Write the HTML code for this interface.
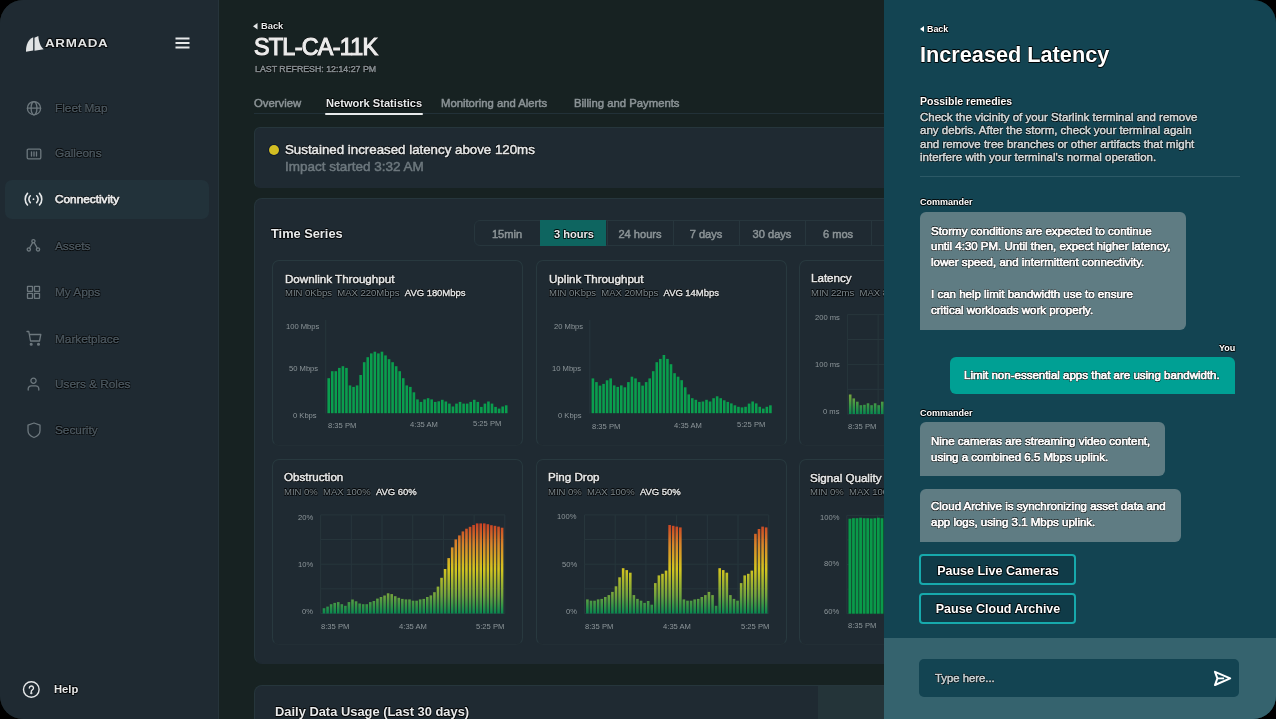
<!DOCTYPE html><html><head><meta charset="utf-8"><style>
*{box-sizing:border-box;margin:0;padding:0}
html,body{width:1276px;height:719px;overflow:hidden;background:#000;font-family:"Liberation Sans",sans-serif;}
.app{position:absolute;left:0;top:0;width:1276px;height:719px;border-radius:23px;overflow:hidden;background:#172222;}
.a{position:absolute;white-space:nowrap;line-height:1;will-change:transform}
.ts{text-shadow:0.6px 0.6px 0.6px rgba(0,0,0,.75),-0.6px -0.6px 0.6px rgba(0,0,0,.75),0.6px -0.6px 0.6px rgba(0,0,0,.75),-0.6px 0.6px 0.6px rgba(0,0,0,.75)}
.md{-webkit-text-stroke:0.5px currentColor}
.mw{-webkit-text-stroke:0.7px #fff}
.side{position:absolute;left:0;top:0;width:219px;height:719px;background:#1f2a32;border-right:1px solid #26343b}
.navbg{position:absolute;left:5px;top:180px;width:204px;height:39px;border-radius:7px;background:#22323a}
.card{position:absolute;background:#1f2a32;border:1px solid #26363c;border-bottom-color:#1f2a32;border-radius:7px}
.ccard{position:absolute;background:#1f2a32;border:1px solid #28393f;border-bottom-color:#222e35;border-radius:7px}
.panel{position:absolute;left:884px;top:0;width:392px;height:719px;background:#134452}
.bub{position:absolute;background:#5f7c83;border-radius:6px 6px 6px 0}
.btn{position:absolute;border:2px solid #17a9ac;border-radius:4px;background:#103b48}
svg{position:absolute;overflow:visible}
</style></head><body><div class="app">
<div class="side"></div>
<div class="navbg"></div>
<svg style="left:0;top:0" width="220" height="719" viewBox="0 0 220 719">
<g fill="#e2e4e5">
<path d="M26 51.8 C25.8 45 28.2 39.5 33.2 37.2 L33.2 50.4 Z"/>
<path d="M34.5 37.7 L38.3 36.1 C38.8 41.5 40.2 46.5 43.7 49.3 L34.5 50.8 Z"/>
</g>
<g stroke="#e6e8e9" stroke-width="1.9" stroke-linecap="butt">
<line x1="175.5" y1="38.5" x2="189.5" y2="38.5"/>
<line x1="175.5" y1="43" x2="189.5" y2="43"/>
<line x1="175.5" y1="47.5" x2="189.5" y2="47.5"/>
</g>
</svg>
<div class="a ts" style="left:45.30px;top:39.48px;font-size:10.3px;color:#e2e4e5;font-weight:bold;letter-spacing:0.5px;transform:scaleX(1.3);transform-origin:0 50%;">ARMADA</div>
<div class="a ts" style="left:54.80px;top:102.81px;font-size:11.8px;color:#4b575f;font-weight:normal;-webkit-text-stroke:0.4px #4b575f">Fleet Map</div>
<div class="a ts" style="left:54.80px;top:148.31px;font-size:11.8px;color:#4b575f;font-weight:normal;-webkit-text-stroke:0.4px #4b575f">Galleons</div>
<div class="a ts" style="left:54.80px;top:194.11px;font-size:11.8px;color:#e6e8e9;font-weight:normal;-webkit-text-stroke:0.75px #e6e8e9">Connectivity</div>
<div class="a ts" style="left:54.80px;top:240.71px;font-size:11.8px;color:#4b575f;font-weight:normal;-webkit-text-stroke:0.4px #4b575f">Assets</div>
<div class="a ts" style="left:54.80px;top:287.41px;font-size:11.8px;color:#4b575f;font-weight:normal;-webkit-text-stroke:0.4px #4b575f">My Apps</div>
<div class="a ts" style="left:54.80px;top:333.51px;font-size:11.8px;color:#4b575f;font-weight:normal;-webkit-text-stroke:0.4px #4b575f">Marketplace</div>
<div class="a ts" style="left:54.80px;top:379.21px;font-size:11.8px;color:#4b575f;font-weight:normal;-webkit-text-stroke:0.4px #4b575f">Users &amp; Roles</div>
<div class="a ts" style="left:54.80px;top:425.31px;font-size:11.8px;color:#4b575f;font-weight:normal;-webkit-text-stroke:0.4px #4b575f">Security</div>
<svg style="left:0;top:0" width="220" height="719" viewBox="0 0 220 719" fill="none" stroke="#6d787e" stroke-width="1.3" stroke-linecap="round" stroke-linejoin="round">
<g transform="translate(34 108.2)"><circle r="6.6"/><ellipse rx="2.9" ry="6.6"/><line x1="-6.6" y1="0" x2="6.6" y2="0"/></g>
<g transform="translate(34 154)"><rect x="-6.8" y="-4.8" width="13.6" height="9.6" rx="1.2"/><line x1="-2.5" y1="-2" x2="-2.5" y2="2"/><line x1="0" y1="-2" x2="0" y2="2"/><line x1="2.5" y1="-2" x2="2.5" y2="2"/></g>
<g transform="translate(33.5 199.2)" stroke="#e6e8e9" stroke-width="1.6"><path d="M-6 -5.8 A8.5 8.5 0 0 0 -6 5.8"/><path d="M-3.2 -3.4 A4.8 4.8 0 0 0 -3.2 3.4"/><path d="M6 -5.8 A8.5 8.5 0 0 1 6 5.8"/><path d="M3.2 -3.4 A4.8 4.8 0 0 1 3.2 3.4"/><circle r="0.9" fill="#e6e8e9" stroke="none"/></g>
<g transform="translate(33.4 245.4)"><circle cx="0" cy="-4.2" r="1.6"/><circle cx="-4.6" cy="4" r="1.6"/><circle cx="4.6" cy="4" r="1.6"/><path d="M-0.8 -2.8 L-3.8 2.6"/><path d="M0.8 -2.8 L3.8 2.6"/></g>
<g transform="translate(33.5 292.3)"><rect x="-6" y="-6" width="5" height="5" rx="0.3"/><rect x="1" y="-6" width="5" height="5" rx="0.3"/><rect x="-6" y="1" width="5" height="5" rx="0.3"/><rect x="1" y="1" width="5" height="5" rx="0.3"/></g>
<g transform="translate(34 338)"><path d="M-7 -6.5 H-5.2 L-3.5 3 H5.5 L6.8 -3.5 H-4.5"/><circle cx="-2.8" cy="6.2" r="0.9" fill="#6d787e"/><circle cx="4.5" cy="6.2" r="0.9" fill="#6d787e"/></g>
<g transform="translate(33.5 384.5)"><circle cx="0" cy="-3.8" r="2.6"/><path d="M-5.3 5.5 V4.3 A3 3 0 0 1 -2.3 1.3 H2.3 A3 3 0 0 1 5.3 4.3 V5.5"/></g>
<g transform="translate(34 430)"><path d="M0 -7 L6 -4.8 V0.5 C6 4 3.5 6.3 0 7.5 C-3.5 6.3 -6 4 -6 0.5 V-4.8 Z"/></g>
<g transform="translate(31.3 689.5)" stroke="#e6e8e9" stroke-width="1.4"><circle r="7.8"/><path d="M-2 -1.4 A2.1 2.1 0 1 1 0.9 0.5 C0.2 0.9 0 1.2 0 1.9"/><circle cx="0" cy="3.7" r="0.45" fill="#e6e8e9"/></g>
</svg>
<div class="a ts" style="left:53.50px;top:684.32px;font-size:11.2px;color:#e6e8e9;font-weight:bold;">Help</div>
<svg style="left:0;top:0" width="884" height="719"><path d="M253 26.3 L257.5 23 V29.6 Z" fill="#e6e8e9"/></svg>
<div class="a ts" style="left:260.50px;top:22.43px;font-size:9.3px;color:#e6e8e9;font-weight:bold;">Back</div>
<div class="a ts" style="left:253.80px;top:36.08px;font-size:23.3px;color:#ececec;font-weight:normal;letter-spacing:-0.7px;-webkit-text-stroke:1.1px #ececec">STL-CA-11K</div>
<div class="a ts md" style="left:254.50px;top:65.35px;font-size:8.8px;color:#868e92;font-weight:normal;">LAST REFRESH: 12:14:27 PM</div>
<div class="a" style="left:254px;top:113px;width:630px;height:1px;background:#223138"></div>
<div class="a" style="left:325px;top:113px;width:98px;height:2px;background:#e8eaeb;border-radius:1px"></div>
<div class="a md" style="left:253.60px;top:98.13px;font-size:11.3px;color:#8b9396;font-weight:normal;">Overview</div>
<div class="a ts" style="left:325.50px;top:98.30px;font-size:11.1px;color:#e8eaeb;font-weight:bold;">Network Statistics</div>
<div class="a md" style="left:441.00px;top:98.13px;font-size:11.3px;color:#8b9396;font-weight:normal;">Monitoring and Alerts</div>
<div class="a md" style="left:573.50px;top:98.13px;font-size:11.3px;color:#8b9396;font-weight:normal;">Billing and Payments</div>
<div class="card" style="left:253.6px;top:127px;width:700px;height:61px;border-radius:6px"></div>
<div class="a" style="left:269px;top:144.5px;width:10px;height:10px;border-radius:50%;background:#d2bd23;box-shadow:0 0 0 1px #101a30"></div>
<div class="a ts md" style="left:285.30px;top:143.04px;font-size:13.3px;color:#e6e8e9;font-weight:normal;">Sustained increased latency above 120ms</div>
<div class="a md" style="left:285.30px;top:159.57px;font-size:13.5px;color:#6d787e;font-weight:normal;">Impact started 3:32 AM</div>
<div class="card" style="left:253.6px;top:198px;width:700px;height:466px;border-radius:8px"></div>
<div class="a ts" style="left:271.00px;top:228.06px;font-size:12.8px;color:#e8eaeb;font-weight:bold;">Time Series</div>
<div class="a" style="left:474px;top:220px;width:480px;height:26px;border:1px solid #27363d;border-radius:6px;background:#1f2a32"></div>
<div class="a md" style="left:307.30px;width:400px;text-align:center;top:228.60px;font-size:11.1px;color:#8b9396;font-weight:normal;">15min</div>
<div class="a" style="left:540.4px;top:220px;width:66.2px;height:25.6px;background:#0e6560"></div>
<div class="a ts" style="left:373.50px;width:400px;text-align:center;top:228.60px;font-size:11.1px;color:#e9ebec;font-weight:bold;">3 hours</div>
<div class="a" style="left:606.6px;top:220px;width:1px;height:25.6px;background:#27363d"></div>
<div class="a md" style="left:439.70px;width:400px;text-align:center;top:228.60px;font-size:11.1px;color:#8b9396;font-weight:normal;">24 hours</div>
<div class="a" style="left:672.8px;top:220px;width:1px;height:25.6px;background:#27363d"></div>
<div class="a md" style="left:505.90px;width:400px;text-align:center;top:228.60px;font-size:11.1px;color:#8b9396;font-weight:normal;">7 days</div>
<div class="a" style="left:739.0px;top:220px;width:1px;height:25.6px;background:#27363d"></div>
<div class="a md" style="left:572.10px;width:400px;text-align:center;top:228.60px;font-size:11.1px;color:#8b9396;font-weight:normal;">30 days</div>
<div class="a" style="left:805.2px;top:220px;width:1px;height:25.6px;background:#27363d"></div>
<div class="a md" style="left:638.30px;width:400px;text-align:center;top:228.60px;font-size:11.1px;color:#8b9396;font-weight:normal;">6 mos</div>
<div class="a" style="left:871.4px;top:220px;width:1px;height:25.6px;background:#27363d"></div>
<div class="a md" style="left:704.50px;width:400px;text-align:center;top:228.60px;font-size:11.1px;color:#8b9396;font-weight:normal;">1 yr</div>
<div class="ccard" style="left:271.5px;top:259.5px;width:251.5px;height:186px"></div>
<div class="ccard" style="left:535.5px;top:259.5px;width:251.5px;height:186px"></div>
<div class="ccard" style="left:798.5px;top:259.5px;width:251.5px;height:186px"></div>
<div class="ccard" style="left:271.5px;top:459px;width:251.5px;height:186px"></div>
<div class="ccard" style="left:535.5px;top:459px;width:251.5px;height:186px"></div>
<div class="ccard" style="left:798.5px;top:459px;width:251.5px;height:186px"></div>
<div class="card" style="left:253.6px;top:685px;width:700px;height:100px;border-radius:8px"></div>
<div class="a" style="left:818px;top:686px;width:70px;height:40px;background:#243439"></div>
<div class="a ts" style="left:275.00px;top:705.78px;font-size:12.9px;color:#e8eaeb;font-weight:bold;">Daily Data Usage (Last 30 days)</div>
<svg style="left:0;top:0" width="884" height="719" viewBox="0 0 884 719"><defs><linearGradient id="g1" gradientUnits="userSpaceOnUse" x1="0" y1="613.5" x2="0" y2="514.9"><stop offset="0" stop-color="#07894f"/><stop offset="0.18" stop-color="#6fa33e"/><stop offset="0.45" stop-color="#d5c51f"/><stop offset="0.7" stop-color="#d8862a"/><stop offset="0.93" stop-color="#c93b24"/></linearGradient><linearGradient id="g2" gradientUnits="userSpaceOnUse" x1="0" y1="614" x2="0" y2="515.5"><stop offset="0" stop-color="#07894f"/><stop offset="0.18" stop-color="#6fa33e"/><stop offset="0.45" stop-color="#d5c51f"/><stop offset="0.7" stop-color="#d8862a"/><stop offset="0.93" stop-color="#c93b24"/></linearGradient><linearGradient id="g3" gradientUnits="userSpaceOnUse" x1="0" y1="414" x2="0" y2="314.6"><stop offset="0" stop-color="#07894f"/><stop offset="0.18" stop-color="#6fa33e"/><stop offset="0.45" stop-color="#d5c51f"/><stop offset="0.7" stop-color="#d8862a"/><stop offset="0.93" stop-color="#c93b24"/></linearGradient></defs><g stroke="#27363c" stroke-width="1"><line x1="325.7" y1="320" x2="325.7" y2="413.5"/><line x1="589.8" y1="320" x2="589.8" y2="413.5"/></g><g stroke="#27363c" stroke-width="1"><line x1="320.60" y1="514.9" x2="320.60" y2="613.5"/><line x1="351.30" y1="514.9" x2="351.30" y2="613.5"/><line x1="382.00" y1="514.9" x2="382.00" y2="613.5"/><line x1="412.70" y1="514.9" x2="412.70" y2="613.5"/><line x1="443.40" y1="514.9" x2="443.40" y2="613.5"/><line x1="474.10" y1="514.9" x2="474.10" y2="613.5"/><line x1="504.80" y1="514.9" x2="504.80" y2="613.5"/><line x1="320.6" y1="514.90" x2="504.80" y2="514.90"/><line x1="320.6" y1="539.55" x2="504.80" y2="539.55"/><line x1="320.6" y1="564.20" x2="504.80" y2="564.20"/><line x1="320.6" y1="588.85" x2="504.80" y2="588.85"/><line x1="320.6" y1="613.50" x2="504.80" y2="613.50"/></g><g stroke="#27363c" stroke-width="1"><line x1="584.50" y1="514.9" x2="584.50" y2="613.5"/><line x1="615.20" y1="514.9" x2="615.20" y2="613.5"/><line x1="645.90" y1="514.9" x2="645.90" y2="613.5"/><line x1="676.60" y1="514.9" x2="676.60" y2="613.5"/><line x1="707.30" y1="514.9" x2="707.30" y2="613.5"/><line x1="738.00" y1="514.9" x2="738.00" y2="613.5"/><line x1="768.70" y1="514.9" x2="768.70" y2="613.5"/><line x1="584.5" y1="514.90" x2="768.70" y2="514.90"/><line x1="584.5" y1="539.55" x2="768.70" y2="539.55"/><line x1="584.5" y1="564.20" x2="768.70" y2="564.20"/><line x1="584.5" y1="588.85" x2="768.70" y2="588.85"/><line x1="584.5" y1="613.50" x2="768.70" y2="613.50"/></g><g stroke="#27363c" stroke-width="1"><line x1="847.40" y1="314.6" x2="847.40" y2="414.2"/><line x1="878.10" y1="314.6" x2="878.10" y2="414.2"/><line x1="908.80" y1="314.6" x2="908.80" y2="414.2"/><line x1="939.50" y1="314.6" x2="939.50" y2="414.2"/><line x1="970.20" y1="314.6" x2="970.20" y2="414.2"/><line x1="1000.90" y1="314.6" x2="1000.90" y2="414.2"/><line x1="1031.60" y1="314.6" x2="1031.60" y2="414.2"/><line x1="847.4" y1="314.60" x2="1031.60" y2="314.60"/><line x1="847.4" y1="339.50" x2="1031.60" y2="339.50"/><line x1="847.4" y1="364.40" x2="1031.60" y2="364.40"/><line x1="847.4" y1="389.30" x2="1031.60" y2="389.30"/><line x1="847.4" y1="414.20" x2="1031.60" y2="414.20"/></g><g stroke="#27363c" stroke-width="1"><line x1="846.80" y1="515.3" x2="846.80" y2="613.7"/><line x1="877.50" y1="515.3" x2="877.50" y2="613.7"/><line x1="908.20" y1="515.3" x2="908.20" y2="613.7"/><line x1="938.90" y1="515.3" x2="938.90" y2="613.7"/><line x1="969.60" y1="515.3" x2="969.60" y2="613.7"/><line x1="1000.30" y1="515.3" x2="1000.30" y2="613.7"/><line x1="1031.00" y1="515.3" x2="1031.00" y2="613.7"/><line x1="846.8" y1="515.30" x2="1031.00" y2="515.30"/><line x1="846.8" y1="539.90" x2="1031.00" y2="539.90"/><line x1="846.8" y1="564.50" x2="1031.00" y2="564.50"/><line x1="846.8" y1="589.10" x2="1031.00" y2="589.10"/><line x1="846.8" y1="613.70" x2="1031.00" y2="613.70"/></g><g fill="#0a9e4e"><rect x="327.40" y="378.20" width="2.6" height="35.00"/><rect x="330.95" y="371.20" width="2.6" height="42.00"/><rect x="334.50" y="371.20" width="2.6" height="42.00"/><rect x="338.05" y="367.90" width="2.6" height="45.30"/><rect x="341.60" y="366.20" width="2.6" height="47.00"/><rect x="345.15" y="367.90" width="2.6" height="45.30"/><rect x="348.70" y="385.40" width="2.6" height="27.80"/><rect x="352.25" y="386.90" width="2.6" height="26.30"/><rect x="355.80" y="385.40" width="2.6" height="27.80"/><rect x="359.35" y="375.00" width="2.6" height="38.20"/><rect x="362.90" y="362.20" width="2.6" height="51.00"/><rect x="366.45" y="357.20" width="2.6" height="56.00"/><rect x="370.00" y="353.40" width="2.6" height="59.80"/><rect x="373.55" y="351.70" width="2.6" height="61.50"/><rect x="377.10" y="353.40" width="2.6" height="59.80"/><rect x="380.65" y="351.70" width="2.6" height="61.50"/><rect x="384.20" y="355.40" width="2.6" height="57.80"/><rect x="387.75" y="359.20" width="2.6" height="54.00"/><rect x="391.30" y="362.20" width="2.6" height="51.00"/><rect x="394.85" y="366.20" width="2.6" height="47.00"/><rect x="398.40" y="371.20" width="2.6" height="42.00"/><rect x="401.95" y="378.20" width="2.6" height="35.00"/><rect x="405.50" y="385.40" width="2.6" height="27.80"/><rect x="409.05" y="386.90" width="2.6" height="26.30"/><rect x="412.60" y="392.30" width="2.6" height="20.90"/><rect x="416.15" y="399.40" width="2.6" height="13.80"/><rect x="419.70" y="401.90" width="2.6" height="11.30"/><rect x="423.25" y="399.40" width="2.6" height="13.80"/><rect x="426.80" y="398.20" width="2.6" height="15.00"/><rect x="430.35" y="399.40" width="2.6" height="13.80"/><rect x="433.90" y="401.90" width="2.6" height="11.30"/><rect x="437.45" y="401.30" width="2.6" height="11.90"/><rect x="441.00" y="399.80" width="2.6" height="13.40"/><rect x="444.55" y="401.50" width="2.6" height="11.70"/><rect x="448.10" y="403.60" width="2.6" height="9.60"/><rect x="451.65" y="406.50" width="2.6" height="6.70"/><rect x="455.20" y="403.60" width="2.6" height="9.60"/><rect x="458.75" y="401.90" width="2.6" height="11.30"/><rect x="462.30" y="403.60" width="2.6" height="9.60"/><rect x="465.85" y="403.60" width="2.6" height="9.60"/><rect x="469.40" y="401.90" width="2.6" height="11.30"/><rect x="472.95" y="399.80" width="2.6" height="13.40"/><rect x="476.50" y="401.90" width="2.6" height="11.30"/><rect x="480.05" y="406.90" width="2.6" height="6.30"/><rect x="483.60" y="403.60" width="2.6" height="9.60"/><rect x="487.15" y="401.50" width="2.6" height="11.70"/><rect x="490.70" y="403.60" width="2.6" height="9.60"/><rect x="494.25" y="406.90" width="2.6" height="6.30"/><rect x="497.80" y="408.60" width="2.6" height="4.60"/><rect x="501.35" y="406.50" width="2.6" height="6.70"/><rect x="504.90" y="405.30" width="2.6" height="7.90"/></g><g fill="#0a9e4e"><rect x="591.60" y="378.40" width="2.6" height="34.80"/><rect x="595.15" y="382.10" width="2.6" height="31.10"/><rect x="598.70" y="385.60" width="2.6" height="27.60"/><rect x="602.25" y="383.90" width="2.6" height="29.30"/><rect x="605.80" y="380.30" width="2.6" height="32.90"/><rect x="609.35" y="378.40" width="2.6" height="34.80"/><rect x="612.90" y="385.40" width="2.6" height="27.80"/><rect x="616.45" y="386.90" width="2.6" height="26.30"/><rect x="620.00" y="385.40" width="2.6" height="27.80"/><rect x="623.55" y="387.30" width="2.6" height="25.90"/><rect x="627.10" y="382.10" width="2.6" height="31.10"/><rect x="630.65" y="376.70" width="2.6" height="36.50"/><rect x="634.20" y="378.40" width="2.6" height="34.80"/><rect x="637.75" y="382.10" width="2.6" height="31.10"/><rect x="641.30" y="385.60" width="2.6" height="27.60"/><rect x="644.85" y="382.10" width="2.6" height="31.10"/><rect x="648.40" y="378.40" width="2.6" height="34.80"/><rect x="651.95" y="371.20" width="2.6" height="42.00"/><rect x="655.50" y="362.20" width="2.6" height="51.00"/><rect x="659.05" y="358.90" width="2.6" height="54.30"/><rect x="662.60" y="355.00" width="2.6" height="58.20"/><rect x="666.15" y="358.90" width="2.6" height="54.30"/><rect x="669.70" y="364.20" width="2.6" height="49.00"/><rect x="673.25" y="373.20" width="2.6" height="40.00"/><rect x="676.80" y="376.70" width="2.6" height="36.50"/><rect x="680.35" y="380.20" width="2.6" height="33.00"/><rect x="683.90" y="387.30" width="2.6" height="25.90"/><rect x="687.45" y="394.40" width="2.6" height="18.80"/><rect x="691.00" y="398.20" width="2.6" height="15.00"/><rect x="694.55" y="399.80" width="2.6" height="13.40"/><rect x="698.10" y="401.90" width="2.6" height="11.30"/><rect x="701.65" y="401.50" width="2.6" height="11.70"/><rect x="705.20" y="399.80" width="2.6" height="13.40"/><rect x="708.75" y="401.50" width="2.6" height="11.70"/><rect x="712.30" y="398.20" width="2.6" height="15.00"/><rect x="715.85" y="396.30" width="2.6" height="16.90"/><rect x="719.40" y="398.20" width="2.6" height="15.00"/><rect x="722.95" y="400.30" width="2.6" height="12.90"/><rect x="726.50" y="401.90" width="2.6" height="11.30"/><rect x="730.05" y="403.40" width="2.6" height="9.80"/><rect x="733.60" y="405.30" width="2.6" height="7.90"/><rect x="737.15" y="406.80" width="2.6" height="6.40"/><rect x="740.70" y="407.40" width="2.6" height="5.80"/><rect x="744.25" y="406.80" width="2.6" height="6.40"/><rect x="747.80" y="403.60" width="2.6" height="9.60"/><rect x="751.35" y="401.50" width="2.6" height="11.70"/><rect x="754.90" y="403.40" width="2.6" height="9.80"/><rect x="758.45" y="406.80" width="2.6" height="6.40"/><rect x="762.00" y="408.60" width="2.6" height="4.60"/><rect x="765.55" y="406.80" width="2.6" height="6.40"/><rect x="769.10" y="405.30" width="2.6" height="7.90"/></g><g fill="url(#g1)"><rect x="322.70" y="608.20" width="2.6" height="5.30"/><rect x="326.26" y="606.60" width="2.6" height="6.90"/><rect x="329.82" y="604.20" width="2.6" height="9.30"/><rect x="333.39" y="602.90" width="2.6" height="10.60"/><rect x="336.95" y="602.10" width="2.6" height="11.40"/><rect x="340.51" y="604.20" width="2.6" height="9.30"/><rect x="344.07" y="605.80" width="2.6" height="7.70"/><rect x="347.63" y="602.10" width="2.6" height="11.40"/><rect x="351.20" y="599.50" width="2.6" height="14.00"/><rect x="354.76" y="601.30" width="2.6" height="12.20"/><rect x="358.32" y="603.50" width="2.6" height="10.00"/><rect x="361.88" y="604.20" width="2.6" height="9.30"/><rect x="365.44" y="604.20" width="2.6" height="9.30"/><rect x="369.01" y="602.10" width="2.6" height="11.40"/><rect x="372.57" y="601.00" width="2.6" height="12.50"/><rect x="376.13" y="598.60" width="2.6" height="14.90"/><rect x="379.69" y="597.00" width="2.6" height="16.50"/><rect x="383.25" y="595.50" width="2.6" height="18.00"/><rect x="386.82" y="593.30" width="2.6" height="20.20"/><rect x="390.38" y="594.10" width="2.6" height="19.40"/><rect x="393.94" y="596.20" width="2.6" height="17.30"/><rect x="397.50" y="597.80" width="2.6" height="15.70"/><rect x="401.06" y="598.90" width="2.6" height="14.60"/><rect x="404.63" y="599.40" width="2.6" height="14.10"/><rect x="408.19" y="599.40" width="2.6" height="14.10"/><rect x="411.75" y="600.70" width="2.6" height="12.80"/><rect x="415.31" y="600.70" width="2.6" height="12.80"/><rect x="418.87" y="599.40" width="2.6" height="14.10"/><rect x="422.44" y="598.90" width="2.6" height="14.60"/><rect x="426.00" y="597.00" width="2.6" height="16.50"/><rect x="429.56" y="595.40" width="2.6" height="18.10"/><rect x="433.12" y="592.20" width="2.6" height="21.30"/><rect x="436.68" y="586.60" width="2.6" height="26.90"/><rect x="440.25" y="577.80" width="2.6" height="35.70"/><rect x="443.81" y="569.00" width="2.6" height="44.50"/><rect x="447.37" y="558.10" width="2.6" height="55.40"/><rect x="450.93" y="547.40" width="2.6" height="66.10"/><rect x="454.49" y="539.40" width="2.6" height="74.10"/><rect x="458.06" y="535.40" width="2.6" height="78.10"/><rect x="461.62" y="531.40" width="2.6" height="82.10"/><rect x="465.18" y="528.70" width="2.6" height="84.80"/><rect x="468.74" y="526.80" width="2.6" height="86.70"/><rect x="472.30" y="525.00" width="2.6" height="88.50"/><rect x="475.87" y="523.40" width="2.6" height="90.10"/><rect x="479.43" y="523.40" width="2.6" height="90.10"/><rect x="482.99" y="523.40" width="2.6" height="90.10"/><rect x="486.55" y="524.20" width="2.6" height="89.30"/><rect x="490.11" y="525.20" width="2.6" height="88.30"/><rect x="493.68" y="525.80" width="2.6" height="87.70"/><rect x="497.24" y="526.60" width="2.6" height="86.90"/><rect x="500.80" y="527.70" width="2.6" height="85.80"/></g><g fill="url(#g1)"><rect x="586.10" y="599.40" width="2.6" height="14.10"/><rect x="589.68" y="600.70" width="2.6" height="12.80"/><rect x="593.25" y="600.70" width="2.6" height="12.80"/><rect x="596.83" y="599.40" width="2.6" height="14.10"/><rect x="600.40" y="598.90" width="2.6" height="14.60"/><rect x="603.98" y="597.00" width="2.6" height="16.50"/><rect x="607.55" y="595.10" width="2.6" height="18.40"/><rect x="611.12" y="591.90" width="2.6" height="21.60"/><rect x="614.70" y="586.30" width="2.6" height="27.20"/><rect x="618.27" y="577.30" width="2.6" height="36.20"/><rect x="621.85" y="568.20" width="2.6" height="45.30"/><rect x="625.43" y="570.10" width="2.6" height="43.40"/><rect x="629.00" y="572.70" width="2.6" height="40.80"/><rect x="632.58" y="595.10" width="2.6" height="18.40"/><rect x="636.15" y="598.90" width="2.6" height="14.60"/><rect x="639.73" y="600.70" width="2.6" height="12.80"/><rect x="643.30" y="602.90" width="2.6" height="10.60"/><rect x="646.88" y="601.00" width="2.6" height="12.50"/><rect x="650.45" y="604.70" width="2.6" height="8.80"/><rect x="654.02" y="583.10" width="2.6" height="30.40"/><rect x="657.60" y="575.40" width="2.6" height="38.10"/><rect x="661.18" y="573.80" width="2.6" height="39.70"/><rect x="664.75" y="570.60" width="2.6" height="42.90"/><rect x="668.33" y="525.00" width="2.6" height="88.50"/><rect x="671.90" y="525.80" width="2.6" height="87.70"/><rect x="675.48" y="526.60" width="2.6" height="86.90"/><rect x="679.05" y="527.40" width="2.6" height="86.10"/><rect x="682.62" y="599.40" width="2.6" height="14.10"/><rect x="686.20" y="600.70" width="2.6" height="12.80"/><rect x="689.78" y="600.70" width="2.6" height="12.80"/><rect x="693.35" y="599.40" width="2.6" height="14.10"/><rect x="696.93" y="598.90" width="2.6" height="14.60"/><rect x="700.50" y="597.00" width="2.6" height="16.50"/><rect x="704.08" y="595.10" width="2.6" height="18.40"/><rect x="707.65" y="591.90" width="2.6" height="21.60"/><rect x="711.23" y="595.10" width="2.6" height="18.40"/><rect x="714.80" y="605.80" width="2.6" height="7.70"/><rect x="718.38" y="568.20" width="2.6" height="45.30"/><rect x="721.95" y="570.10" width="2.6" height="43.40"/><rect x="725.53" y="572.70" width="2.6" height="40.80"/><rect x="729.10" y="595.10" width="2.6" height="18.40"/><rect x="732.68" y="598.90" width="2.6" height="14.60"/><rect x="736.25" y="600.70" width="2.6" height="12.80"/><rect x="739.83" y="583.10" width="2.6" height="30.40"/><rect x="743.40" y="575.40" width="2.6" height="38.10"/><rect x="746.98" y="573.80" width="2.6" height="39.70"/><rect x="750.55" y="570.60" width="2.6" height="42.90"/><rect x="754.12" y="533.80" width="2.6" height="79.70"/><rect x="757.70" y="529.00" width="2.6" height="84.50"/><rect x="761.28" y="526.60" width="2.6" height="86.90"/><rect x="764.85" y="527.40" width="2.6" height="86.10"/></g><g fill="url(#g3)"><rect x="848.90" y="394.50" width="2.6" height="19.50"/><rect x="852.46" y="398.40" width="2.6" height="15.60"/><rect x="856.02" y="401.70" width="2.6" height="12.30"/><rect x="859.58" y="405.20" width="2.6" height="8.80"/><rect x="863.14" y="404.80" width="2.6" height="9.20"/><rect x="866.70" y="403.30" width="2.6" height="10.70"/><rect x="870.26" y="405.20" width="2.6" height="8.80"/><rect x="873.82" y="403.30" width="2.6" height="10.70"/><rect x="877.38" y="405.20" width="2.6" height="8.80"/><rect x="880.94" y="401.70" width="2.6" height="12.30"/><rect x="884.50" y="403.00" width="2.6" height="11.00"/><rect x="888.06" y="404.00" width="2.6" height="10.00"/></g><rect x="848.5" y="519" width="40" height="94.7" fill="#15362b"/><g fill="#0a9a4a"><rect x="848.50" y="518.70" width="2.8" height="95.00"/><rect x="852.06" y="518.20" width="2.8" height="95.50"/><rect x="855.62" y="518.20" width="2.8" height="95.50"/><rect x="859.18" y="517.70" width="2.8" height="96.00"/><rect x="862.74" y="518.20" width="2.8" height="95.50"/><rect x="866.30" y="518.20" width="2.8" height="95.50"/><rect x="869.86" y="518.50" width="2.8" height="95.20"/><rect x="873.42" y="518.20" width="2.8" height="95.50"/><rect x="876.98" y="517.70" width="2.8" height="96.00"/><rect x="880.54" y="518.20" width="2.8" height="95.50"/><rect x="884.10" y="518.70" width="2.8" height="95.00"/><rect x="887.66" y="518.20" width="2.8" height="95.50"/></g></svg>
<div class="a ts md" style="left:285.00px;top:272.78px;font-size:11.6px;color:#e6e8e9;font-weight:normal;">Downlink Throughput</div>
<div class="a ts" style="left:285.0px;top:288.1px;font-size:9.5px;color:#7b868b">MIN 0Kbps&nbsp; MAX 220Mbps&nbsp; <span style="color:#e6e8e9;-webkit-text-stroke:0.35px #e6e8e9;letter-spacing:-0.05px">AVG 180Mbps</span></div>
<div class="a ts md" style="left:549.00px;top:272.78px;font-size:11.6px;color:#e6e8e9;font-weight:normal;">Uplink Throughput</div>
<div class="a ts" style="left:549.0px;top:288.1px;font-size:9.5px;color:#7b868b">MIN 0Kbps&nbsp; MAX 20Mbps&nbsp; <span style="color:#e6e8e9;-webkit-text-stroke:0.35px #e6e8e9;letter-spacing:-0.05px">AVG 14Mbps</span></div>
<div class="a ts md" style="left:810.50px;top:272.48px;font-size:11.6px;color:#e6e8e9;font-weight:normal;">Latency</div>
<div class="a ts" style="left:810.5px;top:287.8px;font-size:9.5px;color:#7b868b">MIN 22ms&nbsp; MAX 80ms&nbsp; <span style="color:#e6e8e9;-webkit-text-stroke:0.35px #e6e8e9;letter-spacing:-0.05px">AVG 40ms</span></div>
<div class="a ts md" style="left:284.00px;top:471.38px;font-size:11.6px;color:#e6e8e9;font-weight:normal;">Obstruction</div>
<div class="a ts" style="left:284.0px;top:486.7px;font-size:9.5px;color:#7b868b">MIN 0%&nbsp; MAX 100%&nbsp; <span style="color:#e6e8e9;-webkit-text-stroke:0.35px #e6e8e9;letter-spacing:-0.05px">AVG 60%</span></div>
<div class="a ts md" style="left:547.50px;top:471.38px;font-size:11.6px;color:#e6e8e9;font-weight:normal;">Ping Drop</div>
<div class="a ts" style="left:547.5px;top:486.7px;font-size:9.5px;color:#7b868b">MIN 0%&nbsp; MAX 100%&nbsp; <span style="color:#e6e8e9;-webkit-text-stroke:0.35px #e6e8e9;letter-spacing:-0.05px">AVG 50%</span></div>
<div class="a ts md" style="left:809.70px;top:471.58px;font-size:11.6px;color:#e6e8e9;font-weight:normal;">Signal Quality</div>
<div class="a ts" style="left:809.7px;top:486.9px;font-size:9.5px;color:#7b868b">MIN 0%&nbsp; MAX 100%&nbsp; <span style="color:#e6e8e9;-webkit-text-stroke:0.35px #e6e8e9;letter-spacing:-0.05px">AVG 95%</span></div>
<div class="a " style="right:957.10px;top:323.17px;font-size:7.6px;color:#8d969a;font-weight:normal;">100 Mbps</div>
<div class="a " style="right:957.50px;top:365.17px;font-size:7.6px;color:#8d969a;font-weight:normal;">50 Mbps</div>
<div class="a " style="right:959.00px;top:411.97px;font-size:7.6px;color:#8d969a;font-weight:normal;">0 Kbps</div>
<div class="a " style="left:328.00px;top:421.97px;font-size:7.6px;color:#8d969a;font-weight:normal;">8:35 PM</div>
<div class="a " style="left:223.50px;width:400px;text-align:center;top:421.37px;font-size:7.6px;color:#8d969a;font-weight:normal;">4:35 AM</div>
<div class="a " style="right:774.40px;top:420.47px;font-size:7.6px;color:#8d969a;font-weight:normal;">5:25 PM</div>
<div class="a " style="right:693.20px;top:322.97px;font-size:7.6px;color:#8d969a;font-weight:normal;">20 Mbps</div>
<div class="a " style="right:694.60px;top:364.77px;font-size:7.6px;color:#8d969a;font-weight:normal;">10 Mbps</div>
<div class="a " style="right:694.60px;top:411.87px;font-size:7.6px;color:#8d969a;font-weight:normal;">0 Kbps</div>
<div class="a " style="left:591.50px;top:422.67px;font-size:7.6px;color:#8d969a;font-weight:normal;">8:35 PM</div>
<div class="a " style="left:488.00px;width:400px;text-align:center;top:421.77px;font-size:7.6px;color:#8d969a;font-weight:normal;">4:35 AM</div>
<div class="a " style="right:510.40px;top:420.67px;font-size:7.6px;color:#8d969a;font-weight:normal;">5:25 PM</div>
<div class="a " style="right:436.60px;top:313.77px;font-size:7.6px;color:#8d969a;font-weight:normal;">200 ms</div>
<div class="a " style="right:436.60px;top:360.97px;font-size:7.6px;color:#8d969a;font-weight:normal;">100 ms</div>
<div class="a " style="right:436.60px;top:407.97px;font-size:7.6px;color:#8d969a;font-weight:normal;">0 ms</div>
<div class="a " style="left:847.80px;top:422.97px;font-size:7.6px;color:#8d969a;font-weight:normal;">8:35 PM</div>
<div class="a " style="right:962.60px;top:513.97px;font-size:7.6px;color:#8d969a;font-weight:normal;">20%</div>
<div class="a " style="right:962.60px;top:560.77px;font-size:7.6px;color:#8d969a;font-weight:normal;">10%</div>
<div class="a " style="right:962.60px;top:607.77px;font-size:7.6px;color:#8d969a;font-weight:normal;">0%</div>
<div class="a " style="left:321.30px;top:622.87px;font-size:7.6px;color:#8d969a;font-weight:normal;">8:35 PM</div>
<div class="a " style="left:212.70px;width:400px;text-align:center;top:622.87px;font-size:7.6px;color:#8d969a;font-weight:normal;">4:35 AM</div>
<div class="a " style="right:771.30px;top:622.87px;font-size:7.6px;color:#8d969a;font-weight:normal;">5:25 PM</div>
<div class="a " style="right:699.30px;top:513.47px;font-size:7.6px;color:#8d969a;font-weight:normal;">100%</div>
<div class="a " style="right:699.30px;top:560.77px;font-size:7.6px;color:#8d969a;font-weight:normal;">50%</div>
<div class="a " style="right:699.30px;top:607.77px;font-size:7.6px;color:#8d969a;font-weight:normal;">0%</div>
<div class="a " style="left:584.90px;top:622.87px;font-size:7.6px;color:#8d969a;font-weight:normal;">8:35 PM</div>
<div class="a " style="left:477.20px;width:400px;text-align:center;top:622.87px;font-size:7.6px;color:#8d969a;font-weight:normal;">4:35 AM</div>
<div class="a " style="right:507.20px;top:622.87px;font-size:7.6px;color:#8d969a;font-weight:normal;">5:25 PM</div>
<div class="a " style="right:436.50px;top:513.67px;font-size:7.6px;color:#8d969a;font-weight:normal;">100%</div>
<div class="a " style="right:436.50px;top:560.47px;font-size:7.6px;color:#8d969a;font-weight:normal;">80%</div>
<div class="a " style="right:436.50px;top:608.07px;font-size:7.6px;color:#8d969a;font-weight:normal;">60%</div>
<div class="a " style="left:847.50px;top:622.27px;font-size:7.6px;color:#8d969a;font-weight:normal;">8:35 PM</div>
<div class="panel"></div>
<div class="a" style="left:884px;top:638px;width:392px;height:81px;background:#35636e"></div>
<svg style="left:0;top:0" width="1276" height="719"><path d="M920 29 L924 26 V32 Z" fill="#ffffff"/></svg>
<div class="a ts" style="left:926.90px;top:25.27px;font-size:8.9px;color:#ffffff;font-weight:bold;">Back</div>
<div class="a ts" style="left:920.00px;top:43.53px;font-size:21.7px;color:#ffffff;font-weight:bold;">Increased Latency</div>
<div class="a ts" style="left:920.00px;top:95.81px;font-size:10.5px;color:#ffffff;font-weight:bold;">Possible remedies</div>
<div class="a ts md" style="left:920.00px;top:112.17px;font-size:11.5px;color:#d3dbdd;font-weight:normal;">Check the vicinity of your Starlink terminal and remove</div>
<div class="a ts md" style="left:920.00px;top:125.44px;font-size:11.5px;color:#d3dbdd;font-weight:normal;">any debris. After the storm, check your terminal again</div>
<div class="a ts md" style="left:920.00px;top:138.71px;font-size:11.5px;color:#d3dbdd;font-weight:normal;">and remove tree branches or other artifacts that might</div>
<div class="a ts md" style="left:920.00px;top:151.98px;font-size:11.5px;color:#d3dbdd;font-weight:normal;">interfere with your terminal&#39;s normal operation.</div>
<div class="a" style="left:920px;top:176px;width:320px;height:1px;background:#2c5966"></div>
<div class="a ts" style="left:920.00px;top:198.28px;font-size:9px;color:#ffffff;font-weight:bold;">Commander</div>
<div class="bub" style="left:919.5px;top:212.3px;width:266.3px;height:118px"></div>
<div class="a ts mw" style="left:931.10px;top:225.67px;font-size:11.5px;color:#ffffff;font-weight:normal;">Stormy conditions are expected to continue</div>
<div class="a ts mw" style="left:931.10px;top:241.47px;font-size:11.5px;color:#ffffff;font-weight:normal;">until 4:30 PM. Until then, expect higher latency,</div>
<div class="a ts mw" style="left:931.10px;top:257.47px;font-size:11.5px;color:#ffffff;font-weight:normal;">lower speed, and intermittent connectivity.</div>
<div class="a ts mw" style="left:931.10px;top:289.47px;font-size:11.5px;color:#ffffff;font-weight:normal;">I can help limit bandwidth use to ensure</div>
<div class="a ts mw" style="left:931.10px;top:305.27px;font-size:11.5px;color:#ffffff;font-weight:normal;">critical workloads work properly.</div>
<div class="a ts" style="left:1219.00px;top:343.78px;font-size:9px;color:#ffffff;font-weight:bold;">You</div>
<div class="bub" style="left:950px;top:357.4px;width:285.2px;height:37px;background:#00a094;border-radius:6px 6px 0 6px"></div>
<div class="a ts mw" style="left:963.70px;top:370.07px;font-size:11.5px;color:#ffffff;font-weight:normal;">Limit non-essential apps that are using bandwidth.</div>
<div class="a ts" style="left:920.00px;top:409.18px;font-size:9px;color:#ffffff;font-weight:bold;">Commander</div>
<div class="bub" style="left:919.6px;top:422.4px;width:245.7px;height:53.7px"></div>
<div class="a ts mw" style="left:931.00px;top:435.67px;font-size:11.5px;color:#ffffff;font-weight:normal;">Nine cameras are streaming video content,</div>
<div class="a ts mw" style="left:931.00px;top:452.27px;font-size:11.5px;color:#ffffff;font-weight:normal;">using a combined 6.5 Mbps uplink.</div>
<div class="bub" style="left:919.6px;top:488.6px;width:261.7px;height:53.1px"></div>
<div class="a ts mw" style="left:931.00px;top:500.67px;font-size:11.5px;color:#ffffff;font-weight:normal;">Cloud Archive is synchronizing asset data and</div>
<div class="a ts mw" style="left:931.00px;top:517.27px;font-size:11.5px;color:#ffffff;font-weight:normal;">app logs, using 3.1 Mbps uplink.</div>
<div class="btn" style="left:919px;top:554.2px;width:156.7px;height:31.3px"></div>
<div class="a ts" style="left:797.50px;width:400px;text-align:center;top:564.72px;font-size:12.5px;color:#ffffff;font-weight:bold;">Pause Live Cameras</div>
<div class="btn" style="left:919px;top:592.6px;width:156.7px;height:31.4px"></div>
<div class="a ts" style="left:797.50px;width:400px;text-align:center;top:602.82px;font-size:12.5px;color:#ffffff;font-weight:bold;">Pause Cloud Archive</div>
<div class="a" style="left:918.8px;top:659.4px;width:319.7px;height:37.6px;background:#134452;border-radius:5px"></div>
<div class="a ts md" style="left:935.20px;top:673.23px;font-size:11.3px;color:#c9d3d6;font-weight:normal;">Type here...</div>
<svg style="left:0;top:0" width="1276" height="719"><g transform="translate(1222.6 678.4)"><path d="M-7.6 -6.6 L7.6 0 L-7.6 6.6 L-5.2 0 Z" fill="none" stroke="#ffffff" stroke-width="2" stroke-linejoin="round"/><line x1="-5.2" y1="0" x2="1.5" y2="0" stroke="#ffffff" stroke-width="1.8"/></g></svg>
</div></body></html>
